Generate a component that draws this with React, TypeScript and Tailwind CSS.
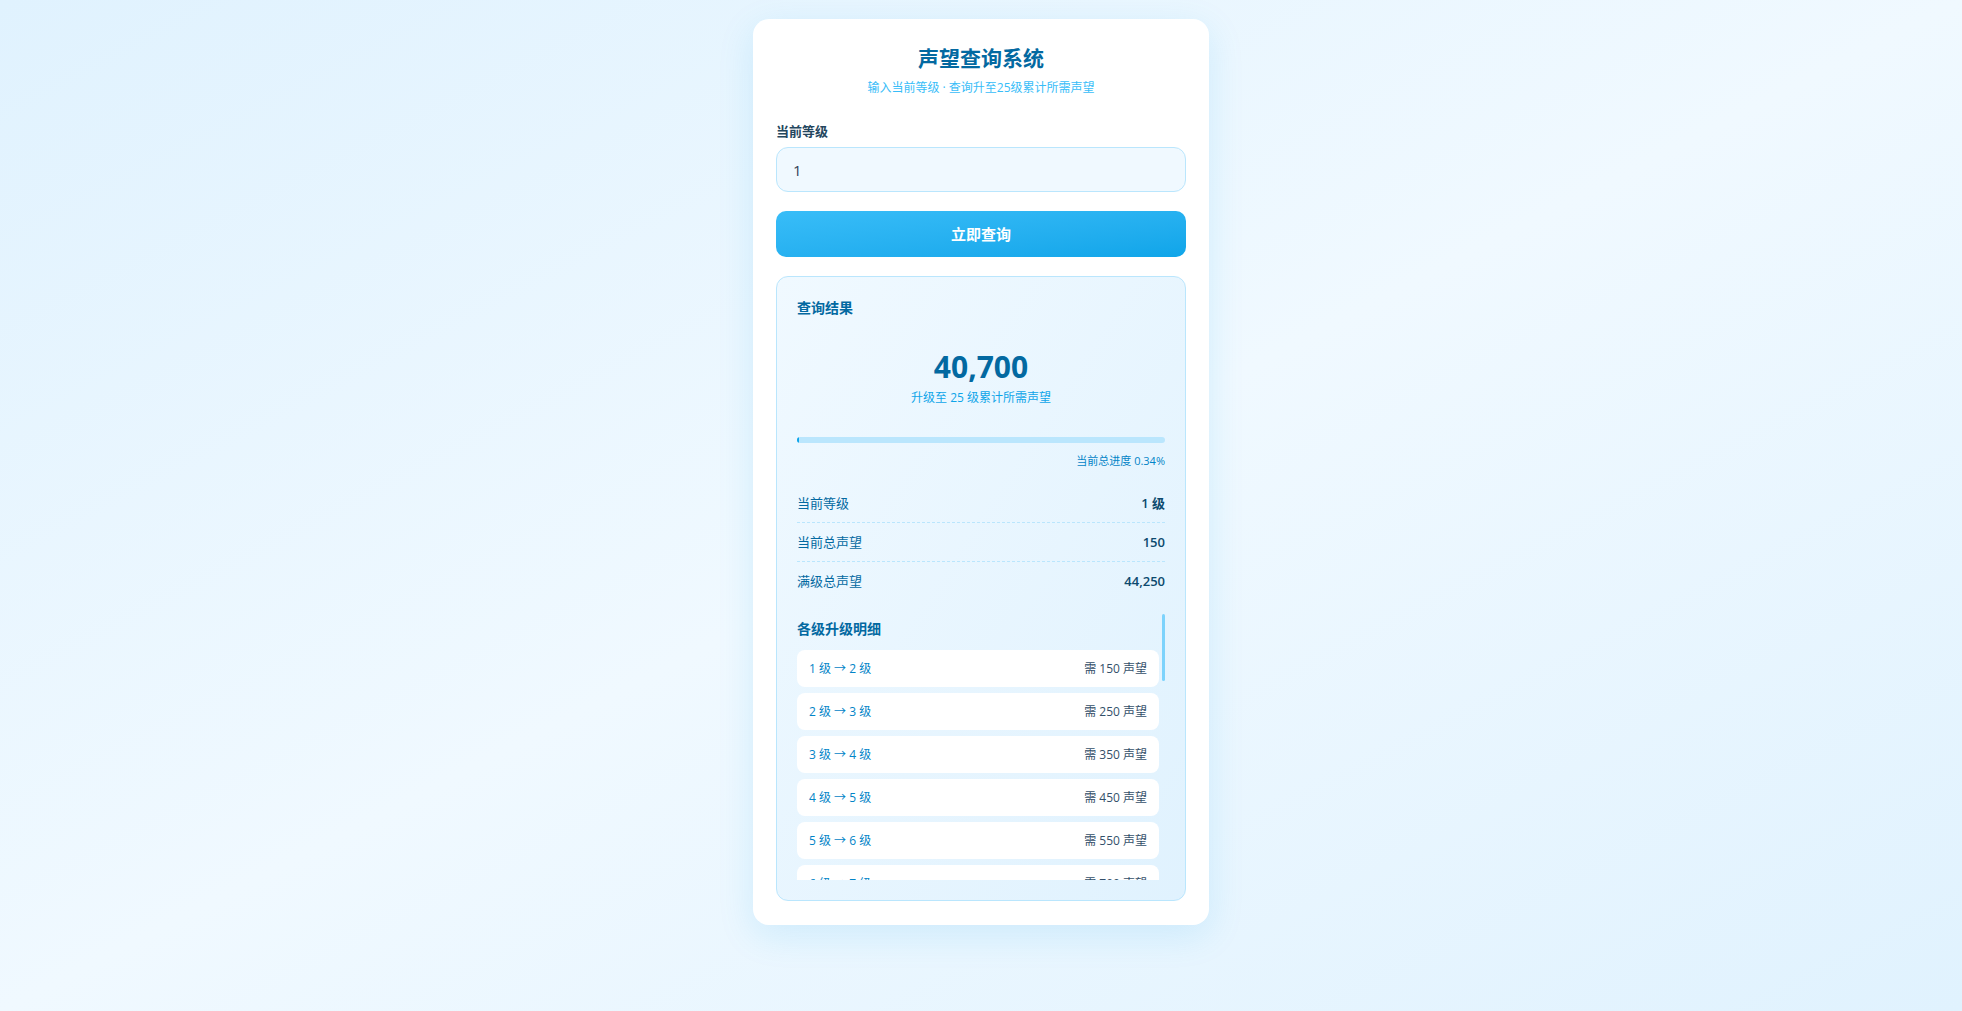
import React, { useEffect, useMemo, useRef, useState } from 'react';

const MAX_LEVEL = 25;

// 每级升级所需声望：前五级每级 +100，之后每级 +150
const costs: number[] = Array.from({ length: MAX_LEVEL - 1 }, (_, i) => {
  if (i < 5) return 150 + i * 100;
  return 700 + (i - 5) * 150;
});

const FULL_TOTAL = 44250;

const fmt = (n: number) => n.toLocaleString('en-US');

export default function App() {
  const [input, setInput] = useState('1');
  const [level, setLevel] = useState(1);
  const listRef = useRef<HTMLDivElement>(null);
  const [thumb, setThumb] = useState({ top: 0, height: 0 });

  const result = useMemo(() => {
    const need = costs.slice(level - 1).reduce((a, b) => a + b, 0);
    const current = costs.slice(0, level).reduce((a, b) => a + b, 0);
    const progress = (current / FULL_TOTAL) * 100;
    return { need, current, progress };
  }, [level]);

  // 自绘滚动条位置
  const updateThumb = () => {
    const el = listRef.current;
    if (!el) return;
    const ratio = el.clientHeight / el.scrollHeight;
    setThumb({ top: el.scrollTop * ratio, height: el.clientHeight * ratio });
  };

  useEffect(updateThumb, [level]);

  const query = () => {
    const n = parseInt(input, 10);
    if (!isNaN(n) && n >= 1 && n <= MAX_LEVEL) setLevel(n);
  };

  return (
    <div
      className="min-h-screen w-full bg-gradient-to-br from-[#e0f2fe] via-[#f0f9ff] to-[#e0f2fe] flex justify-center pt-[19px] pb-10"
      style={{ fontFamily: '"Open Sans", "Noto Sans CJK SC", sans-serif' }}
    >
      <div className="w-[456px] h-fit bg-white rounded-2xl px-[23px] py-6 shadow-[0_10px_36px_rgba(14,165,233,0.13)]">
        <div className="text-center">
          <h1 className="text-[21px] leading-[30px] font-bold text-[#0369a1]">声望查询系统</h1>
          <p className="mt-1.5 text-xs leading-[18px] text-[#38bdf8]">输入当前等级 · 查询升至25级累计所需声望</p>
        </div>

        <label className="block mt-6 text-[13px] leading-5 font-semibold text-[#24465e]">当前等级</label>
        <input
          value={input}
          onChange={e => setInput(e.target.value)}
          inputMode="numeric"
          className="mt-1.5 w-full h-[45px] px-4 rounded-xl border border-[#bae6fd] bg-[#f0f9ff] text-[15px] text-[#334155] outline-none"
        />

        <button
          onClick={query}
          className="mt-[19px] w-full h-[46px] rounded-[10px] bg-gradient-to-br from-[#38bdf8] to-[#0ea5e9] text-white text-[15px] font-bold"
        >
          立即查询
        </button>

        <div className="mt-[19px] rounded-xl border border-[#bae6fd] bg-gradient-to-br from-[#f0f9ff] to-[#e0f2fe] p-5">
          <h2 className="text-sm leading-[22px] font-semibold text-[#0369a1]">查询结果</h2>

          <div className="mt-[30px] text-center">
            <div className="text-[30px] leading-9 font-bold text-[#0369a1]">{fmt(result.need)}</div>
            <div className="mt-1 text-xs leading-[18px] text-[#0ea5e9]">升级至 {MAX_LEVEL} 级累计所需声望</div>
          </div>

          <div className="mt-[30px] h-1.5 w-full rounded-full bg-[#bae6fd] overflow-hidden">
            <div className="h-full rounded-full bg-[#0ea5e9]" style={{ width: `${result.progress}%`, minWidth: 2 }} />
          </div>
          <div className="mt-2.5 text-right text-[11px] leading-4 text-[#0284c7]">
            当前总进度 {result.progress.toFixed(2)}%
          </div>

          <div className="mt-[15px] text-[13px] leading-5">
            <div className="flex justify-between py-[9px] border-b border-dashed border-[#bae6fd]">
              <span className="text-[#0369a1]">当前等级</span>
              <span className="font-semibold text-[#0c4a6e]">{level} 级</span>
            </div>
            <div className="flex justify-between py-[9px] border-b border-dashed border-[#bae6fd]">
              <span className="text-[#0369a1]">当前总声望</span>
              <span className="font-semibold text-[#0c4a6e]">{fmt(result.current)}</span>
            </div>
            <div className="flex justify-between py-[9px]">
              <span className="text-[#0369a1]">满级总声望</span>
              <span className="font-semibold text-[#0c4a6e]">{fmt(FULL_TOTAL)}</span>
            </div>
          </div>

          <div className="relative mt-[14px]">
            <div
              ref={listRef}
              onScroll={updateThumb}
              className="h-[266px] overflow-y-auto pr-1.5 pt-[5px] [scrollbar-width:none]"
            >
              <h3 className="text-sm leading-5 font-semibold text-[#0369a1] mb-[11px]">各级升级明细</h3>
              <div className="flex flex-col gap-1.5">
                {costs.map((c, i) => (
                  <div
                    key={i}
                    className="h-[37px] shrink-0 flex items-center justify-between px-3 bg-white rounded-lg text-xs"
                  >
                    <span className="text-[#0284c7]">{i + 1} 级 → {i + 2} 级</span>
                    <span className="text-[#34506a]">需 {c} 声望</span>
                  </div>
                ))}
              </div>
            </div>
            <div
              className="absolute right-0 w-[3px] rounded-full bg-[#7dd3fc]"
              style={{ top: thumb.top, height: thumb.height }}
            />
          </div>
        </div>
      </div>
    </div>
  );
}
